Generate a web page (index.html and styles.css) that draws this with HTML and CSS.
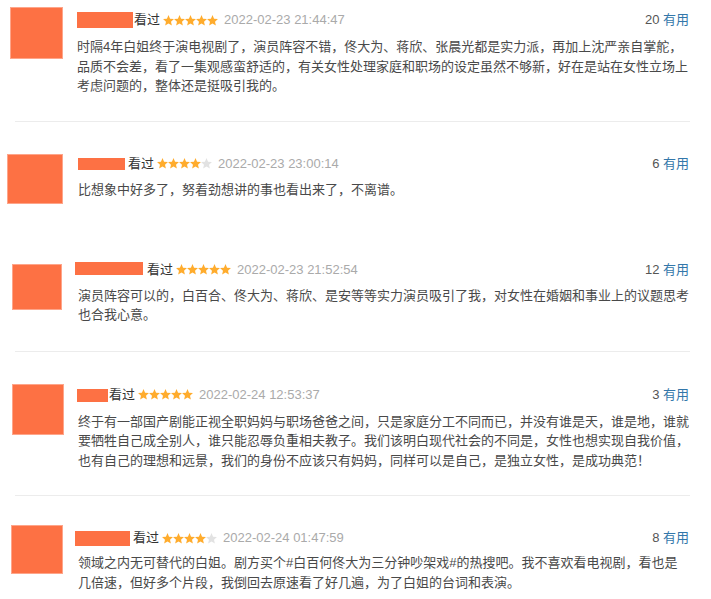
FILE: index.html
```html
<!DOCTYPE html>
<html lang="zh-CN">
<head>
<meta charset="utf-8">
<title>短评</title>
<link rel="stylesheet" href="styles.css">
</head>
<body>
<svg width="0" height="0" class="defs">
  <defs>
    <symbol id="star" viewBox="0 0 10 10">
      <polygon points="5,0.1 6.41,3.36 9.95,3.69 7.28,6.04 8.06,9.51 5,7.7 1.94,9.51 2.72,6.04 0.05,3.69 3.59,3.36"/>
    </symbol>
  </defs>
</svg>
<div class="list">

  <div class="review r1">
    <div class="avatar"></div>
    <div class="body">
      <div class="head">
        <span class="name"></span><span class="seen">看过</span>
        <span class="stars"><svg class="star on"><use href="#star"/></svg><svg class="star on"><use href="#star"/></svg><svg class="star on"><use href="#star"/></svg><svg class="star on"><use href="#star"/></svg><svg class="star on"><use href="#star"/></svg></span>
        <span class="date">2022-02-23 21:44:47</span>
        <span class="votes">20 <span class="useful">有用</span></span>
      </div>
      <p class="text">时隔4年白姐终于演电视剧了，演员阵容不错，佟大为、蒋欣、张晨光都是实力派，再加上沈严亲自掌舵，<br>品质不会差，看了一集观感蛮舒适的，有关女性处理家庭和职场的设定虽然不够新，好在是站在女性立场上<br>考虑问题的，整体还是挺吸引我的。</p>
    </div>
  </div>
  <hr class="divider d1">

  <div class="review r2">
    <div class="avatar"></div>
    <div class="body">
      <div class="head">
        <span class="name"></span><span class="seen">看过</span>
        <span class="stars"><svg class="star on"><use href="#star"/></svg><svg class="star on"><use href="#star"/></svg><svg class="star on"><use href="#star"/></svg><svg class="star on"><use href="#star"/></svg><svg class="star off"><use href="#star"/></svg></span>
        <span class="date">2022-02-23 23:00:14</span>
        <span class="votes">6 <span class="useful">有用</span></span>
      </div>
      <p class="text">比想象中好多了，努着劲想讲的事也看出来了，不离谱。</p>
    </div>
  </div>

  <div class="review r3">
    <div class="avatar"></div>
    <div class="body">
      <div class="head">
        <span class="name"></span><span class="seen">看过</span>
        <span class="stars"><svg class="star on"><use href="#star"/></svg><svg class="star on"><use href="#star"/></svg><svg class="star on"><use href="#star"/></svg><svg class="star on"><use href="#star"/></svg><svg class="star on"><use href="#star"/></svg></span>
        <span class="date">2022-02-23 21:52:54</span>
        <span class="votes">12 <span class="useful">有用</span></span>
      </div>
      <p class="text">演员阵容可以的，白百合、佟大为、蒋欣、是安等等实力演员吸引了我，对女性在婚姻和事业上的议题思考<br>也合我心意。</p>
    </div>
  </div>
  <hr class="divider d2">

  <div class="review r4">
    <div class="avatar"></div>
    <div class="body">
      <div class="head">
        <span class="name"></span><span class="seen">看过</span>
        <span class="stars"><svg class="star on"><use href="#star"/></svg><svg class="star on"><use href="#star"/></svg><svg class="star on"><use href="#star"/></svg><svg class="star on"><use href="#star"/></svg><svg class="star on"><use href="#star"/></svg></span>
        <span class="date">2022-02-24 12:53:37</span>
        <span class="votes">3 <span class="useful">有用</span></span>
      </div>
      <p class="text">终于有一部国产剧能正视全职妈妈与职场爸爸之间，只是家庭分工不同而已，并没有谁是天，谁是地，谁就<br>要牺牲自己成全别人，谁只能忍辱负重相夫教子。我们该明白现代社会的不同是，女性也想实现自我价值，<br>也有自己的理想和远景，我们的身份不应该只有妈妈，同样可以是自己，是独立女性，是成功典范！</p>
    </div>
  </div>
  <hr class="divider d3">

  <div class="review r5">
    <div class="avatar"></div>
    <div class="body">
      <div class="head">
        <span class="name"></span><span class="seen">看过</span>
        <span class="stars"><svg class="star on"><use href="#star"/></svg><svg class="star on"><use href="#star"/></svg><svg class="star on"><use href="#star"/></svg><svg class="star on"><use href="#star"/></svg><svg class="star off"><use href="#star"/></svg></span>
        <span class="date">2022-02-24 01:47:59</span>
        <span class="votes">8 <span class="useful">有用</span></span>
      </div>
      <p class="text">领域之内无可替代的白姐。剧方买个#白百何佟大为三分钟吵架戏#的热搜吧。我不喜欢看电视剧，看也是<br>几倍速，但好多个片段，我倒回去原速看了好几遍，为了白姐的台词和表演。</p>
    </div>
  </div>

</div>
</body>
</html>
```

FILE: styles.css
```css
html, body {
  margin: 0;
  padding: 0;
  background: #fff;
}
body {
  font-family: "Liberation Sans", "Noto Sans CJK SC", sans-serif;
  font-size: 13px;
  color: #494949;
  width: 711px;
  height: 599px;
  overflow: hidden;
}
.defs {
  position: absolute;
  width: 0;
  height: 0;
}
.list {
  display: flex;
  flex-direction: column;
}
.review {
  display: flex;
  align-items: flex-start;
  padding-right: 22px;
}
.avatar {
  flex: none;
  background: #fd7144;
  box-shadow: 0 0 0 1px #fea58a inset;
}
.body {
  flex: 1;
  min-width: 0;
}
.head {
  display: flex;
  align-items: center;
  height: 20px;
  line-height: 20px;
  white-space: nowrap;
}
.name {
  display: inline-block;
  background: #fd7144;
  height: 15px;
}
.seen {
  color: #333;
  margin-left: 1px;
}
.stars {
  display: flex;
  margin-left: 3px;
}
.star {
  width: 11px;
  height: 11px;
}
.star.on { fill: #ffac2d; }
.star.off { fill: #e2e2e2; }
.date {
  color: #aaa;
  margin-left: 6px;
}
.votes {
  margin-left: auto;
  color: #555;
}
.useful {
  color: #3377aa;
}
.text {
  margin: 8px 0 0;
  line-height: 19.5px;
  white-space: nowrap;
}
.divider {
  border: 0;
  border-top: 1px solid #ececec;
  height: 0;
  margin: 0 21px 0 15px;
}

/* per-item offsets (collage of separate captures) */
.r1 { padding-top: 7px; }
.r1 .avatar { width: 53px; height: 52px; margin-left: 10px; }
.r1 .body { margin-left: 14px; margin-top: 3px; }
.r1 .name { width: 56px; height: 16px; }
.r1 .text { margin-top: 7px; }
.d1 { margin-top: 25px; }

.r2 { padding-top: 32px; }
.r2 .avatar { width: 56px; height: 50px; margin-left: 7px; }
.r2 .body { margin-left: 15px; }
.r2 .name { width: 47px; height: 12px; margin-top: 1px; margin-right: 2px; }
.r2 .text { margin-top: 6px; }

.r3 { padding-top: 56px; }
.r3 .avatar { width: 50px; height: 46px; margin-left: 12px; margin-top: 4px; }
.r3 .body { margin-left: 13px; }
.r3 .name { width: 68px; height: 13px; margin-right: 3px; margin-top: -3px; }
.r3 .text { margin-top: 6px; padding-left: 3px; }
.d2 { margin-top: 26px; }

.r4 { padding-top: 32px; }
.r4 .avatar { width: 52px; height: 51px; margin-left: 12px; }
.r4 .body { margin-left: 13px; margin-top: 1px; }
.r4 .name { width: 31px; height: 13px; margin-top: 2px; }
.r4 .text { margin-top: 7px; padding-left: 1px; }
.d3 { margin-top: 25px; }

.r5 { padding-top: 29px; }
.r5 .avatar { width: 52px; height: 49px; margin-left: 11px; }
.r5 .body { margin-left: 12px; margin-top: 3px; }
.r5 .name { width: 55px; height: 15px; margin-right: 2px; }
.r5 .text { margin-top: 5px; padding-left: 3px; }
```
